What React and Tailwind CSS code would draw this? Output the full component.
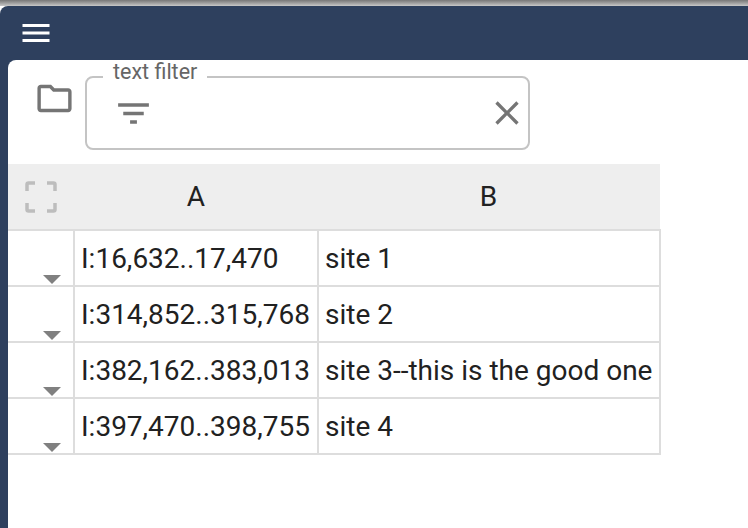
const rows = [
  { range: 'I:16,632..17,470', name: 'site 1' },
  { range: 'I:314,852..315,768', name: 'site 2' },
  { range: 'I:382,162..383,013', name: 'site 3--this is the good one' },
  { range: 'I:397,470..398,755', name: 'site 4' },
]

function MenuIcon() {
  return (
    <svg width="36" height="36" viewBox="0 0 24 24" fill="#fff">
      <path d="M3 18h18v-2H3v2zm0-5h18v-2H3v2zm0-7v2h18V6H3z" />
    </svg>
  )
}

function FolderIcon() {
  return (
    <svg width="41" height="41" viewBox="0 0 24 24" fill="#757575">
      <path d="M9.17 6l2 2H20v10H4V6h5.17M10 4H4c-1.1 0-1.99.9-1.99 2L2 18c0 1.1.9 2 2 2h16c1.1 0 2-.9 2-2V8c0-1.1-.9-2-2-2h-8l-2-2z" />
    </svg>
  )
}

function FilterIcon() {
  return (
    <svg width="41" height="41" viewBox="0 0 24 24" fill="#757575">
      <path d="M10 18h4v-2h-4v2zM3 6v2h18V6H3zm3 7h12v-2H6v2z" />
    </svg>
  )
}

function CloseIcon() {
  return (
    <svg width="40" height="40" viewBox="0 0 24 24" fill="#757575">
      <path d="M19 6.41L17.59 5 12 10.59 6.41 5 5 6.41 10.59 12 5 17.59 6.41 19 12 13.41 17.59 19 19 17.59 13.41 12z" />
    </svg>
  )
}

function FullscreenIcon() {
  return (
    <svg width="40" height="40" viewBox="0 0 40 40" fill="none" stroke="#bdbdbd" strokeWidth="3.5">
      <path d="M6 14V7.500A1.500 1.500 0 0 1 7.500 6H14M26 6h6.500A1.500 1.500 0 0 1 34 7.500V14M34 26v6.500a1.500 1.500 0 0 1-1.500 1.500H26M14 34H7.500A1.500 1.500 0 0 1 6 32.500V26" />
    </svg>
  )
}

export default function App() {
  return (
    <div className="h-[528px] w-[748px] overflow-hidden bg-white font-['Roboto',sans-serif]">
      <div className="h-[6px] bg-gradient-to-b from-[#777777] to-[#c8c8c8]" />
      <div className="h-[522px] rounded-tl-lg bg-[#2e405e] pl-2">
        <div className="flex h-[54px] items-center pl-[10px]">
          <MenuIcon />
        </div>
        <div className="h-[468px] rounded-tl-lg bg-white">
          <div className="flex h-[104px] items-start pl-[26px] pt-[16px]">
            <div className="pr-[10px] pt-[2px]">
              <FolderIcon />
            </div>
            <div className="relative flex h-[74px] w-[445px] items-center justify-between rounded-lg border-2 border-[#c4c4c4] pl-[26px] pr-[1px]">
              <span className="absolute -top-[16px] left-[16px] bg-white px-[10px] text-[21.5px] leading-[20px] text-[#666666]">text filter</span>
              <FilterIcon />
              <CloseIcon />
            </div>
          </div>
          <div className="w-[653px] text-[28px] text-[#212121]">
            <div className="flex h-[65px] w-[652px] bg-[#eeeeee]">
              <div className="flex w-[67px] items-center justify-center pr-[1px]">
                <FullscreenIcon />
              </div>
              <div className="flex w-[244px] items-center justify-center pr-[2px]">A</div>
              <div className="flex flex-1 items-center justify-center pr-[2px]">B</div>
            </div>
            {rows.map((row) => (
              <div key={row.range} className="flex h-[56px] border-t-2 border-[#dddddd] last:h-[58px] last:border-b-2">
                <div className="relative w-[67px] border-r-2 border-[#dddddd]">
                  <span className="absolute bottom-[1px] right-[12px] h-0 w-0 border-x-[9px] border-t-[9px] border-x-transparent border-t-[#808080]" />
                </div>
                <div className="flex w-[244px] items-center border-r-2 border-[#dddddd] pl-[6px] pt-[2px]">{row.range}</div>
                <div className="flex flex-1 items-center whitespace-nowrap border-r-2 border-[#dddddd] pl-[6px] pt-[2px]">{row.name}</div>
              </div>
            ))}
          </div>
        </div>
      </div>
    </div>
  )
}
